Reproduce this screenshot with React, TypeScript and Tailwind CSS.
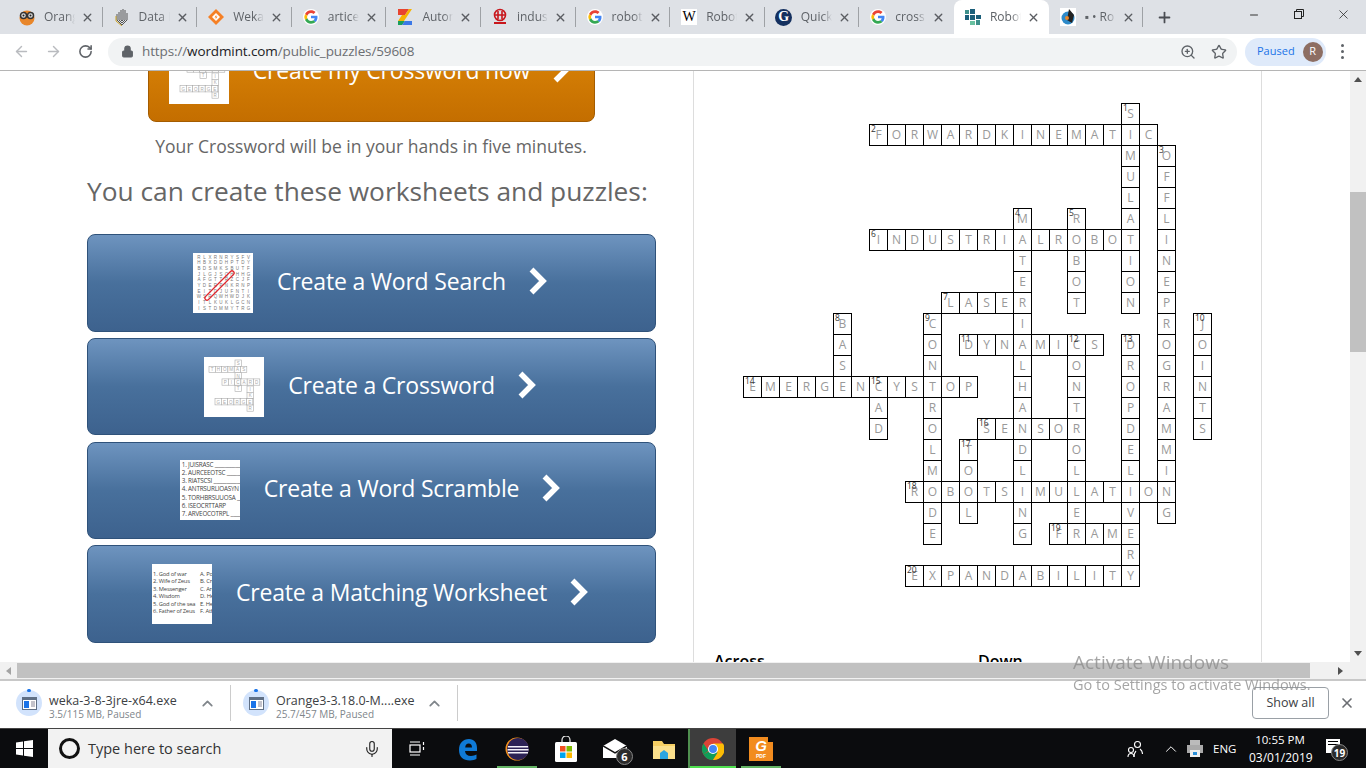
import { ArrowLeft, ArrowRight, RotateCw, Lock, ZoomIn, Star, Plus, X, Minus, ChevronUp, Mic } from "lucide-react";
import type { ReactNode } from "react";

const GoogleIcon = () => (
  <svg width="16" height="16" viewBox="0 0 48 48">
    <circle cx="24" cy="24" r="24" fill="#fff" />
    <path fill="#EA4335" d="M24 12c3 0 5.700 1 7.800 3l5.800-5.800C34 6 29.400 4 24 4 16.200 4 9.400 8.500 6.100 15l6.800 5.300C14.500 15.500 18.900 12 24 12z" />
    <path fill="#4285F4" d="M43.500 24.500c0-1.400-.1-2.700-.4-4H24v7.600h11c-.5 2.500-1.900 4.600-4 6l6.500 5c3.800-3.500 6-8.700 6-14.600z" />
    <path fill="#FBBC05" d="M12.900 28.700A12 12 0 0 1 12.900 20.300L6.100 15a20 20 0 0 0 0 18z" />
    <path fill="#34A853" d="M24 44c5.400 0 9.900-1.800 13.500-4.900l-6.500-5c-1.800 1.200-4.100 1.900-7 1.900-5.100 0-9.500-3.500-11.100-8.300L6.100 33C9.400 39.500 16.200 44 24 44z" />
  </svg>
);

const favicons: ReactNode[] = [
  <svg width="18" height="18" viewBox="0 0 18 18" key="orange">
    <circle cx="9" cy="10" r="7.500" fill="#e8862a" />
    <circle cx="5.500" cy="7.500" r="3" fill="#ddd" stroke="#333" strokeWidth="1.500" />
    <circle cx="12.500" cy="7.500" r="3" fill="#ddd" stroke="#333" strokeWidth="1.500" />
    <circle cx="5.500" cy="7.500" r="1" fill="#222" />
    <circle cx="12.500" cy="7.500" r="1" fill="#222" />
  </svg>,
  <svg width="16" height="18" viewBox="0 0 16 18" key="data" fill="none" stroke="#555" strokeWidth="1">
    <path d="M3 6v6l5 5 5-5V5M5 4v8l3 3 3-3V2M7 2v10l1 1 1-1V1" />
    <path d="M2 8v5l6 5" stroke="#c9a227" />
  </svg>,
  <svg width="18" height="18" viewBox="0 0 18 18" key="weka">
    <path d="M9 1l8 8-8 8-8-8z" fill="#f58025" />
    <path d="M9 5l4 4-4 4-4-4z" fill="#fff" />
    <path d="M9.500 6.500l-2 3h1.500l-.5 2 2-3H9z" fill="#f58025" />
  </svg>,
  <GoogleIcon key="g1" />,
  <svg width="16" height="18" viewBox="0 0 16 18" key="autom">
    <path d="M1 1h11l-4 6H1z" fill="#e8442e" />
    <path d="M12 1l3 0-4 6H8z" fill="#f6b400" />
    <path d="M5 7h6l-4 6H1z" fill="#f6b400" />
    <path d="M1 13h7l-3 4H1z" fill="#1a9e5c" />
    <path d="M8 13h7v4H5z" fill="#3b78e7" />
  </svg>,
  <svg width="16" height="18" viewBox="0 0 16 18" key="indust" fill="none" stroke="#c8171d" strokeWidth="1.600">
    <circle cx="8" cy="7" r="5.500" />
    <path d="M6 3v8M10 3v8M3 7h10" />
    <path d="M2 15h12" strokeWidth="2" />
  </svg>,
  <GoogleIcon key="g2" />,
  <span key="w" className="flex h-4 w-4 items-center justify-center bg-white font-['Liberation_Serif',serif] text-[14px] leading-none text-black">W</span>,
  <span key="quick" className="flex h-[17px] w-[17px] items-center justify-center rounded-full bg-[#14305f] font-['Liberation_Serif',serif] text-[14px] font-bold leading-none text-white">G</span>,
  <GoogleIcon key="g3" />,
  <svg width="16" height="16" viewBox="0 0 16 16" key="robot">
    <rect x="0" y="1" width="4" height="4" fill="#3d8f8a" />
    <rect x="5" y="0" width="5" height="5" fill="#1b5f7a" />
    <rect x="0" y="6" width="4" height="5" fill="#1b5f7a" />
    <rect x="5" y="6" width="5" height="5" fill="#1b5f7a" />
    <rect x="11" y="6" width="5" height="4" fill="#1b5f7a" />
    <rect x="5" y="12" width="5" height="4" fill="#68c0a0" />
    <rect x="11" y="11" width="4" height="5" fill="#3d8f8a" />
  </svg>,
  <svg width="16" height="18" viewBox="0 0 16 18" key="rx">
    <rect width="16" height="18" fill="#fff" />
    <circle cx="8" cy="10" r="6.500" fill="#2d8ac9" />
    <path d="M9 1l5 6-2 8-5-3z" fill="#222" />
    <circle cx="7" cy="10" r="2" fill="#e8862a" />
  </svg>,
];

const tabs = ["Orange", "Data I", "Weka", "artice", "Automa", "industr", "robot", "Robot", "Quick", "cross", "Robot", "▪ • Ro"];

function BrowserTabs() {
  return (
    <div className="flex h-[34px] bg-[#dee1e6] pl-2">
      {tabs.map((title, i) => {
        const active = i === 10;
        const noSep = i === 9 || i === 10;
        return (
          <div key={i} className={`relative flex h-[34px] w-[94.6px] items-center pl-[10px] ${active ? "rounded-t-lg bg-white" : ""}`}>
            <span className="flex w-[18px] justify-center">{favicons[i]}</span>
            <span className="ml-[8px] w-[31px] overflow-hidden whitespace-nowrap font-['Open_Sans',sans-serif] text-[12px] text-[#5f6368] [mask-image:linear-gradient(to_right,black_70%,transparent)]">
              {title}
            </span>
            <X className="absolute left-[73px] top-[11px] text-[#5a5d62]" size={13} strokeWidth={2.5} />
            {!noSep && <span className="absolute right-0 top-[7px] h-[20px] w-px bg-[#9ea1a5]" />}
          </div>
        );
      })}
      <Plus className="ml-[13px] mt-[9px] text-[#4a4d52]" size={17} strokeWidth={2.5} />
      <div className="ml-auto flex">
        <span className="flex w-[45px] justify-center pt-[9px]"><Minus size={12} className="text-[#333]" /></span>
        <span className="flex w-[45px] justify-center pt-[8px]">
          <svg width="12" height="12" viewBox="0 0 12 12" fill="none" stroke="#222"><rect x="1.500" y="3.500" width="7" height="7" /><path d="M3.500 3V1.500h7v7H9" /></svg>
        </span>
        <span className="flex w-[45px] justify-center pt-[7px]"><X size={15} strokeWidth={1.2} className="text-[#222]" /></span>
      </div>
    </div>
  );
}

function Toolbar() {
  return (
    <div className="flex h-[37px] items-center border-b border-[#b5b5b5] bg-white pb-[1px]">
      <ArrowLeft className="ml-[13px] text-[#b9bbbf]" size={17} strokeWidth={2} />
      <ArrowRight className="ml-[15px] text-[#b9bbbf]" size={17} strokeWidth={2} />
      <RotateCw className="ml-[16px] text-[#5f6368]" size={15} strokeWidth={2.5} />
      <div className="ml-[15px] flex h-[28px] w-[1129px] items-center rounded-full bg-[#f1f3f4] pl-[13px] pr-[10px]">
        <Lock size={13} fill="#5f6368" className="text-[#5f6368]" strokeWidth={2} />
        <span className="ml-[8px] font-['Open_Sans',sans-serif] text-[13.5px] tracking-[-0.12px] text-[#6b6e72]">
          https://<span className="text-[#202124]">wordmint.com</span>/public_puzzles/59608
        </span>
        <ZoomIn className="ml-auto text-[#5f6368]" size={16} strokeWidth={2} />
        <Star className="ml-[15px] text-[#5f6368]" size={16} strokeWidth={2} />
      </div>
      <div className="ml-[8px] flex h-[28px] w-[81px] items-center rounded-full bg-[#dfeafa] pl-[12px] font-['Open_Sans',sans-serif] text-[11px] text-[#1a73e8]">
        Paused
        <span className="ml-[8px] flex h-[20px] w-[20px] items-center justify-center rounded-full bg-[#8d6e63] text-[11px] text-white">R</span>
      </div>
      <span className="ml-[15px] flex flex-col gap-[3px]">
        <i className="h-[3px] w-[3px] rounded-full bg-[#5f6368]" />
        <i className="h-[3px] w-[3px] rounded-full bg-[#5f6368]" />
        <i className="h-[3px] w-[3px] rounded-full bg-[#5f6368]" />
      </span>
    </div>
  );
}

const Chevron = () => (
  <svg className="-ml-[2px] mr-[2px] mb-[4px]" width="20" height="28" viewBox="0 0 20 28" fill="none" stroke="#fff" strokeWidth="5.500">
    <path d="M3.500 2.500l11.500 11.500-11.500 11.500" />
  </svg>
);

function Thumb({ children }: { children: ReactNode }) {
  return <div className="h-[60px] w-[60px] shrink-0 overflow-hidden bg-white">{children}</div>;
}

const searchRows = ["RLXRNRYSFV", "HBXDDHPTDY", "BDSMKSBUTF", "JLGJSQHHHG", "AFGTTRZCJF", "YDERPNKRNP", "EITDJUFNTI", "WSRQWHWDJK", "ITLKUKLGCN", "ISTDMMYTRG"];

const WordSearchThumb = () => (
  <Thumb>
    <div className="relative h-full w-full">
      <div className="pl-[3px] pt-[1.500px] font-['Liberation_Sans',sans-serif] text-[4.500px] leading-[5.700px] text-[#777]">
        {searchRows.map((r) => (
          <div key={r} className="flex">
            {r.split("").map((c, i) => <span key={i} className="w-[5.500px] text-center">{c}</span>)}
          </div>
        ))}
      </div>
      <svg className="absolute left-0 top-0" width="60" height="60" viewBox="0 0 60 60" fill="none" stroke="#e0282e" strokeWidth="1.200">
        <path d="M12.500 43.500l25-25a2 2 0 0 1 3 3l-25 25a2 2 0 0 1-3-3z" />
      </svg>
    </div>
  </Thumb>
);

const thumbWords: [number, number, boolean, string][] = [
  [31, 3, false, "SANCT"],
  [5, 9.3, true, "THOMAS"],
  [18, 21.9, true, "PICARD"],
  [43, 29, false, "IKER"],
  [11, 41.6, true, "GEORGE"],
];

const CrosswordThumb = () => (
  <Thumb>
    <svg width="60" height="60" viewBox="0 0 60 60">
      {thumbWords.map(([x, y, across, word]) =>
        word.split("").map((c, i) => {
          const cx = across ? x + i * 6.3 : x;
          const cy = across ? y : y + i * 6.3;
          return (
            <g key={`${x}-${y}-${i}`}>
              <rect x={cx} y={cy} width="6.300" height="6.300" fill="#fff" stroke="#aaa" strokeWidth="0.600" />
              <text x={cx + 3.1} y={cy + 5} fontSize="4.500" textAnchor="middle" fill="#aaa" fontFamily="Liberation Sans, sans-serif">{c}</text>
            </g>
          );
        })
      )}
    </svg>
  </Thumb>
);

const ScrambleThumb = () => (
  <Thumb>
    <div className="pl-[2px] pt-[1px] font-['Open_Sans',sans-serif] text-[6.300px] leading-[8.100px] text-[#444] whitespace-nowrap">
      {["1. JUISRASC ______________", "2. AURCEEOTSC ___________", "3. RIATSCSI ______________", "4. ANTRSURLIOASYN ______", "5. TORHBRSUUOSA ________", "6. ISEOCRTTARP", "7. ARVEOCOTRPL _________"].map((l) => <div key={l}>{l}</div>)}
    </div>
  </Thumb>
);

const MatchingThumb = () => (
  <Thumb>
    <div className="pl-[1px] pt-[7px] font-['Open_Sans',sans-serif] text-[5.800px] leading-[7.500px] text-[#444]">
      {[["1. God of war", "A. Poseidon"], ["2. Wife of Zeus", "B. Cronus"], ["3. Messenger", "C. Ares"], ["4. Wisdom", "D. Hera"], ["5. God of the sea", "E. Hermes"], ["6. Father of Zeus", "F. Athena"]].map(([a, b]) => (
        <div key={a} className="flex whitespace-nowrap">
          <span className="w-[47px] shrink-0">{a}</span>
          <span>{b}</span>
        </div>
      ))}
    </div>
  </Thumb>
);

const worksheets = [
  { label: "Create a Word Search", thumb: <WordSearchThumb /> },
  { label: "Create a Crossword", thumb: <CrosswordThumb /> },
  { label: "Create a Word Scramble", thumb: <ScrambleThumb /> },
  { label: "Create a Matching Worksheet", thumb: <MatchingThumb /> },
];

function LeftColumn() {
  return (
    <div className="w-[693px] shrink-0 font-['Open_Sans',sans-serif]">
      <div className="ml-[148px] -mt-[46px] flex h-[97px] w-[447px] items-center justify-center gap-[24px] rounded-lg border border-[#a45c00] bg-gradient-to-b from-[#e08a0a] to-[#c46e00] text-[23px] tracking-[-0.2px] text-white">
        <CrosswordThumb />
        <span className="mb-[7px]">Create my Crossword now</span>
        <span className="mb-[5px]"><Chevron /></span>
      </div>
      <p className="ml-[49px] mt-[11px] text-center text-[17.5px] leading-[27px] text-[#666]">Your Crossword will be in your hands in five minutes.</p>
      <h2 className="mt-[13px] pl-[87px] text-[26.3px] leading-[36px] text-[#666]">You can create these worksheets and puzzles:</h2>
      <div className="ml-[87px] mt-[25px] grid w-[569px] grid-rows-[98px_97px_97px_98px] gap-y-[6.330px]">
        {worksheets.map((w) => (
          <a key={w.label} className="flex items-center justify-center gap-[24px] rounded-lg border border-[#2f527a] bg-gradient-to-b from-[#6e94bf] via-[#48709c] via-50% to-[#3d628e] text-[23px] tracking-[-0.2px] text-white">
            {w.thumb}
            <span className="mb-[4px]">{w.label}</span>
            <Chevron />
          </a>
        ))}
      </div>
    </div>
  );
}

type Word = { n: number; col: number; row: number; across: boolean; text: string };

const words: Word[] = [
  { n: 1, col: 21, row: 0, across: false, text: "SIMULATION" },
  { n: 2, col: 7, row: 1, across: true, text: "FORWARDKINEMATIC" },
  { n: 3, col: 23, row: 2, across: false, text: "OFFLINEPROGRAMMING" },
  { n: 4, col: 15, row: 5, across: false, text: "MATERIALHANDLING" },
  { n: 5, col: 18, row: 5, across: false, text: "ROBOT" },
  { n: 6, col: 7, row: 6, across: true, text: "INDUSTRIALROBOT" },
  { n: 7, col: 11, row: 9, across: true, text: "LASER" },
  { n: 8, col: 5, row: 10, across: false, text: "BASE" },
  { n: 9, col: 10, row: 10, across: false, text: "CONTROLMODE" },
  { n: 10, col: 25, row: 10, across: false, text: "JOINTS" },
  { n: 11, col: 12, row: 11, across: true, text: "DYNAMICS" },
  { n: 12, col: 18, row: 11, across: false, text: "CONTROLLER" },
  { n: 13, col: 21, row: 11, across: false, text: "DROPDELIVERY" },
  { n: 14, col: 0, row: 13, across: true, text: "EMERGENCYSTOP" },
  { n: 15, col: 7, row: 13, across: false, text: "CAD" },
  { n: 16, col: 13, row: 15, across: true, text: "SENSOR" },
  { n: 17, col: 12, row: 16, across: false, text: "TOOL" },
  { n: 18, col: 9, row: 18, across: true, text: "ROBOTSIMULATION" },
  { n: 19, col: 17, row: 20, across: true, text: "FRAME" },
  { n: 20, col: 9, row: 22, across: true, text: "EXPANDABILITY" },
];

function buildCells() {
  const cells = new Map<string, { col: number; row: number; letter: string; n?: number }>();
  for (const w of words) {
    w.text.split("").forEach((letter, i) => {
      const col = w.across ? w.col + i : w.col;
      const row = w.across ? w.row : w.row + i;
      const key = `${col}-${row}`;
      const prev = cells.get(key);
      cells.set(key, { col, row, letter, n: prev?.n ?? (i === 0 ? w.n : undefined) });
    });
  }
  return [...cells.values()];
}

function Crossword() {
  return (
    <div className="ml-[49px] mt-[32px] grid grid-cols-[repeat(26,18px)] grid-rows-[repeat(23,21px)] font-['Open_Sans',sans-serif]">
      {buildCells().map((c) => (
        <div
          key={`${c.col}-${c.row}`}
          style={{ gridColumn: c.col + 1, gridRow: c.row + 1 }}
          className="relative flex h-[22px] w-[19px] items-center justify-center border border-black bg-white text-[12px] text-[#999]"
        >
          {c.letter}
          {c.n !== undefined && <span className="absolute left-[1px] top-[-2px] text-[8.500px] leading-[12px] text-[#333]">{c.n}</span>}
        </div>
      ))}
    </div>
  );
}

function RightColumn() {
  return (
    <div className="w-[569px] shrink-0 border-x border-[#ddd]">
      <Crossword />
      <div className="mt-[63px] flex pl-[20px] font-['Open_Sans',sans-serif] text-[16px] font-semibold text-black">
        <span className="w-[264px]">Across</span>
        <span>Down</span>
      </div>
    </div>
  );
}

function VerticalScrollbar() {
  return (
    <div className="ml-auto flex w-[16px] shrink-0 flex-col items-center bg-[#f1f1f1]">
      <span className="mt-[6px] h-0 w-0 border-x-[4px] border-b-[5px] border-x-transparent border-b-[#505050]" />
      <span className="mt-[110px] h-[160px] w-full bg-[#c1c1c1]" />
      <span className="mb-[6px] mt-auto h-0 w-0 border-x-[4px] border-t-[5px] border-x-transparent border-t-[#505050]" />
    </div>
  );
}

function HorizontalScrollbar() {
  return (
    <div className="flex h-[17px] items-center bg-[#f1f1f1]">
      <span className="ml-[6px] h-0 w-0 border-y-[4px] border-r-[5px] border-y-transparent border-r-[#a3a3a3]" />
      <span className="ml-[6px] h-[15px] w-[1293px] bg-[#c1c1c1]" />
      <span className="ml-[28px] h-0 w-0 border-y-[4px] border-l-[5px] border-y-transparent border-l-[#505050]" />
    </div>
  );
}

function DownloadItem({ name, size, className }: { name: string; size: string; className: string }) {
  return (
    <div className={`flex h-[36px] items-center border-r border-[#ccc] ${className}`}>
      <div className="relative flex h-[26px] w-[26px] shrink-0 items-center justify-center rounded-full bg-[#d2e3fc]">
        <span className="absolute -top-[1px] h-[3px] w-[4px] rounded-full bg-[#1a73e8]" />
        <svg width="15" height="13" viewBox="0 0 15 13"><rect width="15" height="13" fill="#5f6f85" /><rect x="1" y="3" width="13" height="9" fill="#fff" /><rect x="2" y="4" width="5" height="7" fill="#1a73e8" /><path d="M9 5h4M9 7h4M9 9h4" stroke="#889" strokeWidth="1" /></svg>
      </div>
      <div className="ml-[7px] mt-[6px] w-[148px] font-['Open_Sans',sans-serif]">
        <div className="whitespace-nowrap text-[12.500px] leading-[15px] text-[#3c4043]">{name}</div>
        <div className="whitespace-nowrap text-[10px] leading-[12px] text-[#80868b]">{size}</div>
      </div>
      <ChevronUp size={17} strokeWidth={2.5} className="ml-[2px] text-[#80868b]" />
    </div>
  );
}

function DownloadBar() {
  return (
    <div className="flex h-[49px] items-center border-t-2 border-[#c8c8c8] bg-white pb-[3px]">
      <DownloadItem name="weka-3-8-3jre-x64.exe" size="3.5/115 MB, Paused" className="w-[231px] pl-[16px]" />
      <DownloadItem name="Orange3-3.18.0-M....exe" size="25.7/457 MB, Paused" className="w-[227px] pl-[12px]" />
      <span className="ml-auto flex h-[32px] w-[77px] items-center justify-center rounded border border-[#9aa0a6] font-['Open_Sans',sans-serif] text-[12.500px] text-[#3c4043]">Show all</span>
      <X size={16} strokeWidth={2.5} className="ml-[10px] mr-[11px] text-[#6b6e72]" />
    </div>
  );
}

const TaskSlot = ({ w, className, bar, children }: { w: string; className?: string; bar?: string; children: ReactNode }) => (
  <div className={`relative flex h-full items-center justify-center ${w} ${className ?? ""}`}>
    {children}
    {bar && <span className={`absolute bottom-0 left-0 right-0 h-[2px] ${bar}`} />}
  </div>
);

function Taskbar() {
  return (
    <div className="flex h-[40px] border-t border-[#444] bg-[#0b0c0e] font-['Open_Sans',sans-serif]">
      <div className="flex w-[48px] items-center justify-center">
        <svg width="17" height="17" viewBox="0 0 17 17" fill="#fff"><path d="M0 2.500l7-1v6.500H0zM8 1.300l9-1.300v8H8zM0 9h7v6.500l-7-1zM8 9h9v8l-9-1.300z" /></svg>
      </div>
      <div className="flex w-[344px] items-center bg-[#f2f2f2] pl-[11px] text-[14.500px] text-[#333]">
        <span className="h-[21px] w-[21px] rounded-full border-[3px] border-[#111]" />
        <span className="ml-[8px]">Type here to search</span>
        <Mic size={18} strokeWidth={1.5} className="ml-auto mr-[11px] text-[#222]" />
      </div>
      <TaskSlot w="w-[49px]">
        <svg width="16" height="18" viewBox="0 0 16 18" fill="none" stroke="#fff" strokeWidth="1.200"><rect x="1" y="5" width="10" height="7" /><path d="M1 2h10M1 15h10M14.500 2v3M14.500 7v3" /></svg>
      </TaskSlot>
      <TaskSlot w="w-[48px]" className="ml-[3px]">
        <svg width="22" height="24" viewBox="0 0 22 24" fill="none"><path d="M2 13C2 6 6 2 12 2c5 0 8 3.500 8 9v3H8c.3 3.200 2.500 5 6 5 2.200 0 4-.5 5.500-1.400v4.200C18 23 15.800 23.500 13 23.500 6 23.500 2 19.500 2 13zm6.200-2.600h6.800c0-2.400-1.300-4-3.300-4-2 0-3.300 1.600-3.500 4z" fill="#0f7ad6" /></svg>
      </TaskSlot>
      <TaskSlot w="w-[40px]" bar="bg-[#64b464]" className="ml-[5px]">
        <svg width="24" height="24" viewBox="0 0 24 24"><circle cx="12" cy="12" r="11.500" fill="#f7941e" /><circle cx="13" cy="12" r="11" fill="#2c2255" /><path d="M3 9h20v1.500H3zM2.500 12h21v1.500h-21zM3 15h20v1.500H3z" fill="#f4f2fa" /></svg>
      </TaskSlot>
      <TaskSlot w="w-[48px]" className="ml-[5px]">
        <svg width="24" height="26" viewBox="0 0 24 26"><path d="M8 7V4a4 4 0 0 1 8 0v3" fill="none" stroke="#eee" strokeWidth="1.200" /><rect x="1" y="6" width="22" height="20" rx="1.500" fill="#fff" /><rect x="6" y="10" width="5.500" height="5.500" fill="#f25022" /><rect x="12.500" y="10" width="5.500" height="5.500" fill="#7fba00" /><rect x="6" y="16.500" width="5.500" height="5.500" fill="#00a4ef" /><rect x="12.500" y="16.500" width="5.500" height="5.500" fill="#ffb900" /></svg>
      </TaskSlot>
      <TaskSlot w="w-[50px]">
        <span className="relative">
          <svg width="24" height="20" viewBox="0 0 24 20"><path d="M0 7L12 0l12 7v12H0z" fill="#fff" /><path d="M0 7l12 7 12-7" fill="none" stroke="#111" strokeWidth="1.500" /></svg>
          <span className="absolute -right-[6px] top-[9px] flex h-[17px] w-[17px] items-center justify-center rounded-full border border-[#888] bg-[#2b2b2b] text-[11px] font-bold leading-none text-white">6</span>
        </span>
      </TaskSlot>
      <TaskSlot w="w-[48px]">
        <svg width="22" height="20" viewBox="0 0 22 20"><path d="M0 2h9l2 3h11v15H0z" fill="#f6cf63" /><path d="M0 7h22v13H0z" fill="#fbe08c" /><path d="M7 20v-6l4-3 4 3v6z" fill="#2ba5e0" /></svg>
      </TaskSlot>
      <TaskSlot w="w-[48px]" bar="bg-[#4fe04f]" className="border-l-2 border-[#4f8f4f] bg-[#3d3d3d]">
        <svg width="22" height="22" viewBox="0 0 24 24"><circle cx="12" cy="12" r="12" fill="#db4437" /><path d="M12 12L1.600 18A12 12 0 0 0 12 24l5-8z" fill="#0f9d58" /><path d="M12 6h10.900A12 12 0 0 1 12 24l5-8z" fill="#fbbc05" /><path d="M1.600 6a12 12 0 0 0 0 12L7 14z" fill="#0f9d58" /><circle cx="12" cy="12" r="5.500" fill="#fff" /><circle cx="12" cy="12" r="4.300" fill="#4285f4" /></svg>
      </TaskSlot>
      <TaskSlot w="w-[40px]" bar="bg-[#64b464]" className="ml-[5px]">
        <span className="relative flex h-[24px] w-[24px] flex-col items-center justify-center bg-[#f28c1f] font-['Liberation_Sans',sans-serif] text-white">
          <span className="text-[15px] font-bold italic leading-[15px]">G</span>
          <span className="text-[5px] font-bold leading-[6px]">PDF</span>
          <span className="absolute right-0 top-0 h-[5px] w-[5px] bg-[#0b0c0e]" />
        </span>
      </TaskSlot>
      <div className="ml-auto flex items-center text-white">
        <svg width="16" height="18" viewBox="0 0 16 18" fill="none" stroke="#fff" strokeWidth="1.100"><circle cx="10.500" cy="4.500" r="3" /><path d="M7 17c0-3 1-5 2-6M13 9c1.500 1 2.500 3 2.500 5" /><circle cx="4" cy="10" r="2.500" /><path d="M1 17c0-2 1-3.500 3-3.500s3 1.500 3 3.500" /></svg>
        <ChevronUp size={18} strokeWidth={1.3} className="ml-[19px]" />
        <svg className="ml-[7px]" width="16" height="17" viewBox="0 0 16 17"><rect x="3" y="0" width="10" height="5" fill="#bbb" /><rect x="0" y="5" width="16" height="8" fill="#aaa" /><rect x="3" y="10" width="10" height="7" fill="#eee" /><rect x="6" y="12" width="4" height="3" fill="#2a8fd8" /></svg>
        <span className="ml-[10px] w-[28px] text-[11.500px]">ENG</span>
        <div className="ml-[8px] w-[62px] text-center text-[11.5px] leading-[18px]">
          <div>10:55 PM</div>
          <div className="text-[12px]">03/01/2019</div>
        </div>
        <span className="relative mb-[5px] ml-[15px] mr-[26px] flex h-[14px] w-[14px] flex-col gap-[2px] bg-white p-[2px]">
          <i className="h-px bg-black" />
          <i className="h-px bg-black" />
          <span className="absolute -right-[8px] top-[5px] flex h-[17px] w-[17px] items-center justify-center rounded-full border border-[#888] bg-[#2b2b2b] text-[10px] font-bold leading-none text-white">19</span>
        </span>
      </div>
    </div>
  );
}

export default function App() {
  return (
    <div className="relative flex h-screen w-full flex-col overflow-hidden bg-white">
      <BrowserTabs />
      <Toolbar />
      <div className="flex min-h-0 flex-1 overflow-hidden">
        <LeftColumn />
        <RightColumn />
        <VerticalScrollbar />
      </div>
      <HorizontalScrollbar />
      <DownloadBar />
      <Taskbar />
      {/* watermark sits on top of everything */}
      <div className="pointer-events-none absolute left-[1073px] top-[649px] font-['Open_Sans',sans-serif] text-[#8f8f8f] opacity-80">
        <div className="text-[19px] leading-[26px]">Activate Windows</div>
        <div className="mt-[1px] text-[14.500px] leading-[18px]">Go to Settings to activate Windows.</div>
      </div>
    </div>
  );
}
